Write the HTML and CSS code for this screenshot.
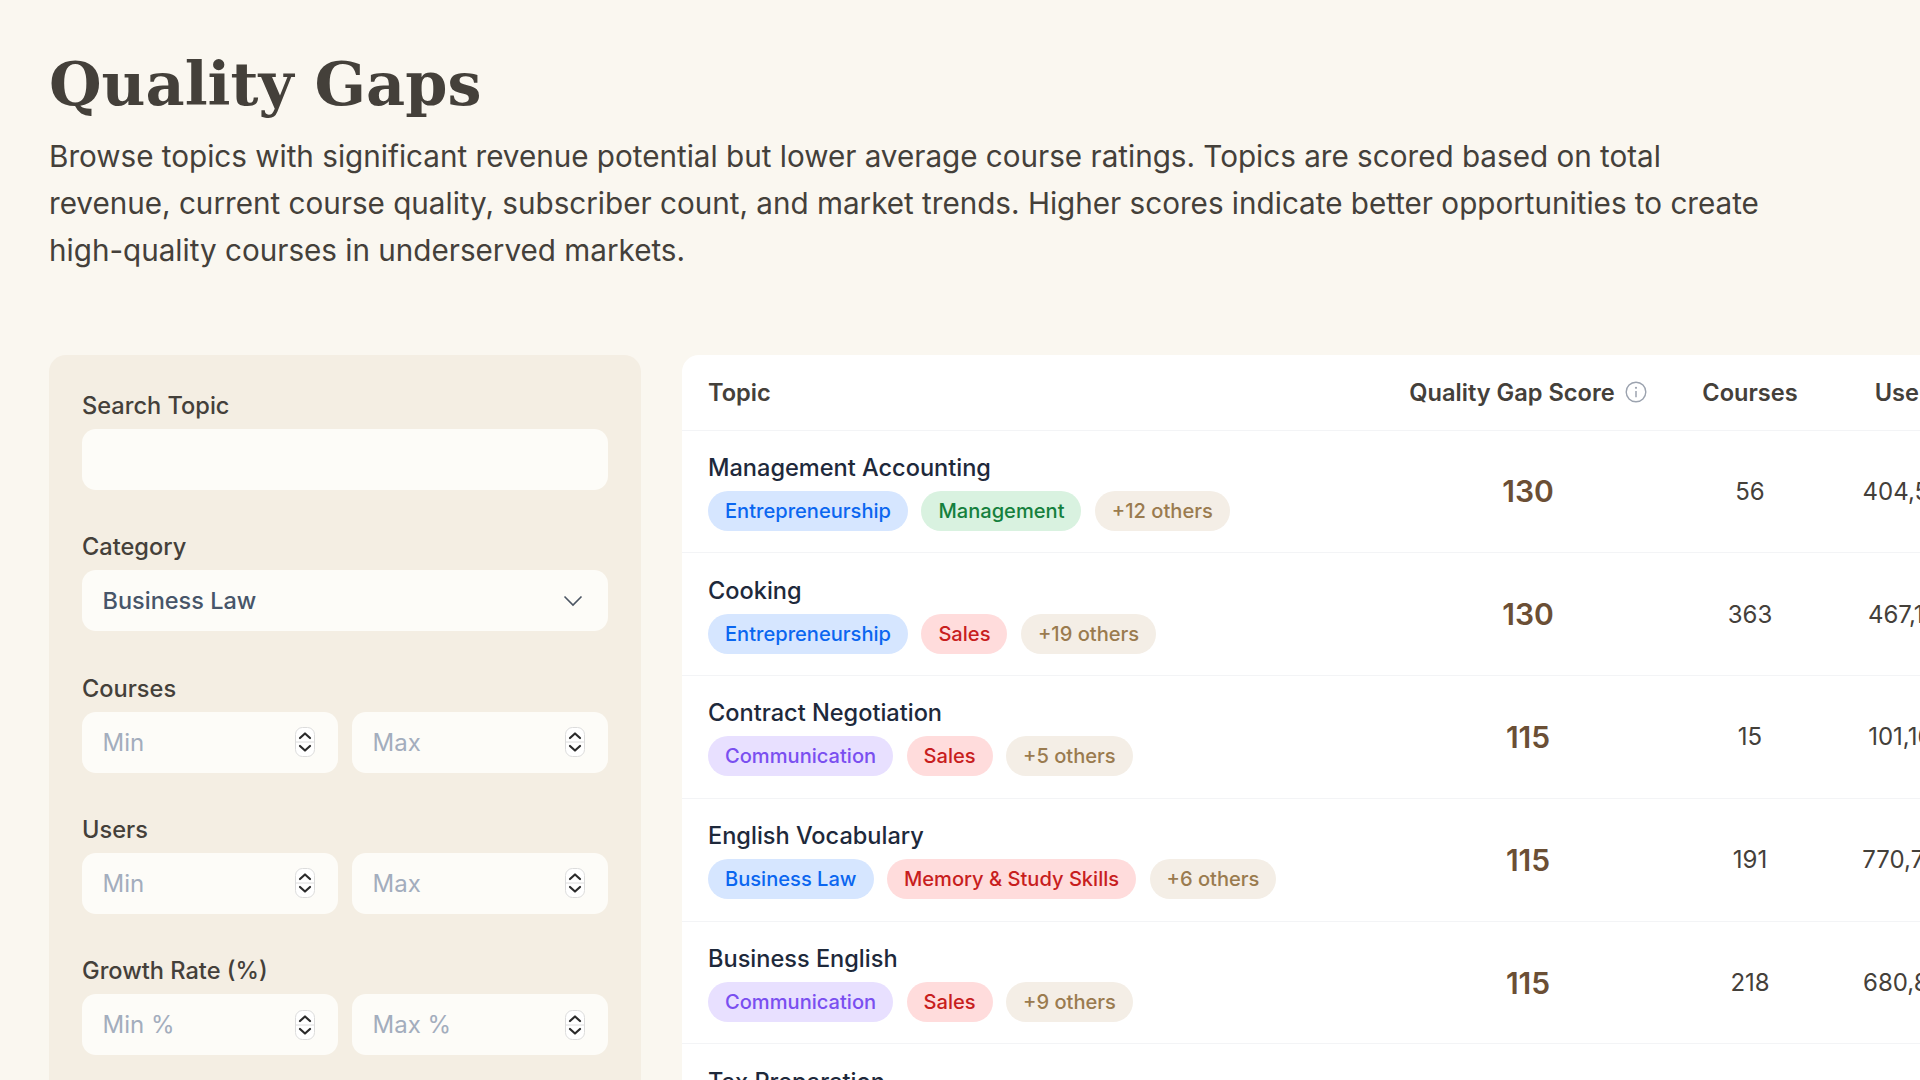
FILE: index.html
```html
<!DOCTYPE html>
<html lang="en">
<head>
<meta charset="utf-8">
<title>Quality Gaps</title>
<link rel="stylesheet" href="styles.css">
</head>
<body>
<svg class="defs" width="0" height="0" aria-hidden="true">
  <symbol id="spin" viewBox="0 0 20 30">
    <rect x="0.5" y="0.5" width="19" height="29" rx="7" fill="#fff" stroke="#dcdcdc"/>
    <path d="M0.5 15H19.5" stroke="#dcdcdc" stroke-width="1"/>
    <path d="M5 11 10 6.5l5 4.5M5 19l5 4.5 5-4.5" fill="none" stroke="#2b2b2b" stroke-width="2.2" stroke-linecap="round" stroke-linejoin="round"/>
  </symbol>
</svg>
<header class="intro">
  <h1 class="title">Quality Gaps</h1>
  <p class="lead">Browse topics with significant revenue potential but lower average course ratings. Topics are scored based on total revenue, current course quality, subscriber count, and market trends. Higher scores indicate better opportunities to create high-quality courses in underserved markets.</p>
</header>
<main class="layout">
  <aside class="filters">
    <div class="group"><div class="label">Search Topic</div><div class="field"></div></div>
    <div class="group"><div class="label">Category</div>
      <div class="field select"><span>Business Law</span>
        <svg class="chev" width="20" height="12" viewBox="0 0 20 12"><path d="M1.5 1.5 10 10l8.5-8.5" fill="none" stroke="#4b5563" stroke-width="1.6"/></svg>
      </div>
    </div>
    <div class="group"><div class="label">Courses</div>
      <div class="pair">
        <div class="field num"><span class="ph">Min</span><svg class="spin"><use href="#spin"/></svg></div>
        <div class="field num"><span class="ph">Max</span><svg class="spin"><use href="#spin"/></svg></div>
      </div>
    </div>
    <div class="group"><div class="label">Users</div>
      <div class="pair">
        <div class="field num"><span class="ph">Min</span><svg class="spin"><use href="#spin"/></svg></div>
        <div class="field num"><span class="ph">Max</span><svg class="spin"><use href="#spin"/></svg></div>
      </div>
    </div>
    <div class="group"><div class="label">Growth Rate (%)</div>
      <div class="pair">
        <div class="field num"><span class="ph">Min %</span><svg class="spin"><use href="#spin"/></svg></div>
        <div class="field num"><span class="ph">Max %</span><svg class="spin"><use href="#spin"/></svg></div>
      </div>
    </div>
  </aside>
  <section class="card">
    <div class="row head">
      <div class="cell topic">Topic</div>
      <div class="cell mid score-head">Quality Gap Score
        <svg class="info" width="22" height="22" viewBox="0 0 22 22"><circle cx="11" cy="11" r="9.8" fill="none" stroke="#9ca3af" stroke-width="1.4"/><circle cx="11" cy="6.8" r="1.1" fill="#9ca3af"/><path d="M11 10v6.2" stroke="#9ca3af" stroke-width="1.5"/></svg>
      </div>
      <div class="cell mid">Courses</div>
      <div class="cell mid">Users</div>
    </div>
    <div class="row">
      <div class="cell topic"><div class="name">Management Accounting</div>
        <div class="chips"><span class="chip blue">Entrepreneurship</span><span class="chip green">Management</span><span class="chip more">+12 others</span></div></div>
      <div class="cell mid score">130</div><div class="cell mid val">56</div><div class="cell mid val">404,512</div>
    </div>
    <div class="row">
      <div class="cell topic"><div class="name">Cooking</div>
        <div class="chips"><span class="chip blue">Entrepreneurship</span><span class="chip red">Sales</span><span class="chip more">+19 others</span></div></div>
      <div class="cell mid score">130</div><div class="cell mid val">363</div><div class="cell mid val">467,118</div>
    </div>
    <div class="row">
      <div class="cell topic"><div class="name">Contract Negotiation</div>
        <div class="chips"><span class="chip purple">Communication</span><span class="chip red">Sales</span><span class="chip more">+5 others</span></div></div>
      <div class="cell mid score">115</div><div class="cell mid val">15</div><div class="cell mid val">101,164</div>
    </div>
    <div class="row">
      <div class="cell topic"><div class="name">English Vocabulary</div>
        <div class="chips"><span class="chip blue">Business Law</span><span class="chip red">Memory &amp; Study Skills</span><span class="chip more">+6 others</span></div></div>
      <div class="cell mid score">115</div><div class="cell mid val">191</div><div class="cell mid val">770,702</div>
    </div>
    <div class="row">
      <div class="cell topic"><div class="name">Business English</div>
        <div class="chips"><span class="chip purple">Communication</span><span class="chip red">Sales</span><span class="chip more">+9 others</span></div></div>
      <div class="cell mid score">115</div><div class="cell mid val">218</div><div class="cell mid val">680,815</div>
    </div>
    <div class="row">
      <div class="cell topic"><div class="name">Tax Preparation</div><div class="chips blank"></div></div>
    </div>
  </section>
</main>
</body>
</html>
```
FILE: styles.css
```css
* { box-sizing: border-box; }
html, body { margin: 0; height: 1080px; overflow: hidden; }
body {
  background: #faf7f0;
  font-family: "Inter", "Liberation Sans", sans-serif;
  color: #44403a;
  padding: 48px 0 0 49px;
  width: 1920px;
}
.defs { position: absolute; }
.title {
  margin: 0;
  font-family: "DejaVu Serif", serif;
  font-weight: 700;
  font-size: 60.4px;
  line-height: 72px;
  color: #44403a;
}
.lead {
  margin: 13px 0 0;
  width: 1730px;
  font-size: 29.65px;
  line-height: 47px;
  color: #44403a;
}
.layout { display: flex; gap: 41px; align-items: flex-start; margin-top: 81px; }
.filters {
  flex: 0 0 592px;
  background: #f4eee3;
  border-radius: 17px;
  padding: 34px 33px 0;
  height: 800px;
  display: flex;
  flex-direction: column;
  gap: 40.3px;
}
.label { font-size: 23.6px; line-height: 34px; font-weight: 500; color: #44403a; margin-bottom: 6px; }
.field {
  height: 61px;
  border-radius: 14px;
  background: #fdfcf8;
  display: flex;
  align-items: center;
  justify-content: space-between;
  padding: 0 20.5px;
  font-size: 24px;
}
.select { color: #475569; font-weight: 500; font-size: 23.5px; padding-right: 25px; }
.pair { display: grid; grid-template-columns: 1fr 1fr; gap: 14px; }
.ph { color: #a3adbd; }
.num { padding-right: 23px; }
.spin { width: 20px; height: 30px; }
.card {
  flex: 0 0 1400px;
  background: #fff;
  border-radius: 17px 0 0 0;
  overflow: hidden;
}
.row {
  display: grid;
  grid-template-columns: 702px 288px 156px 160px;
  height: 122.8px;
  align-items: center;
  border-bottom: 1.5px solid #f3f4f6;
}
.row.head { height: 75.5px; font-size: 23.6px; font-weight: 600; color: #44403a; }
.cell { padding: 0 26px; }
.mid { text-align: center; white-space: nowrap; }
.score-head { display: flex; align-items: center; justify-content: center; gap: 10px; padding: 0; }
.info { flex: none; }
.name { font-size: 23.55px; line-height: 32px; font-weight: 500; color: #1e293b; }
.chips { display: flex; gap: 13.4px; margin-top: 7px; }
.blank { height: 40px; }
.chip {
  height: 40px;
  display: inline-flex;
  align-items: center;
  padding: 0 17px;
  border-radius: 20px;
  font-size: 20.1px;
  font-weight: 500;
  white-space: nowrap;
}
.blue { background: #d6e6ff; color: #0b66f0; }
.green { background: #d9f2e0; color: #15803d; }
.red { background: #ffdcdc; color: #c81e1e; }
.purple { background: #e8e0ff; color: #7a4ff0; }
.more { background: #f4eee6; color: #9a7b4f; }
.score { font-size: 30px; font-weight: 600; color: #6b4f35; }
.val { font-size: 24px; color: #44403a; }
```
